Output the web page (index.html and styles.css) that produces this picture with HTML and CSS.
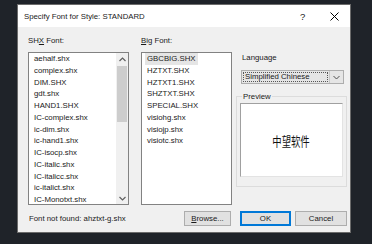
FILE: index.html
```html
<!DOCTYPE html>
<html lang="en">
<head>
    <meta charset="UTF-8">
    <title>Specify Font for Style</title>
    <link rel="stylesheet" href="styles.css">
</head>
<body>
<div class="dialog">
    <div class="titlebar">
        <span class="title">Specify Font for Style: STANDARD</span>
        <span class="help">?</span>
        <span class="close">
            <svg width="9" height="9" viewBox="0 0 9 9"><path d="M0.5 0.5 L8.5 8.5 M8.5 0.5 L0.5 8.5" stroke="#000" stroke-width="1" fill="none"/></svg>
        </span>
    </div>

    <div class="body">
        <div class="main">
            <!-- SHX font list -->
            <div class="col col-shx">
                <div class="label">SH<u>X</u> Font:</div>
                <div class="listbox">
                    <ul class="items">
                        <li>aehalf.shx</li>
                        <li>complex.shx</li>
                        <li>DIM.SHX</li>
                        <li>gdt.shx</li>
                        <li>HAND1.SHX</li>
                        <li>IC-complex.shx</li>
                        <li>ic-dim.shx</li>
                        <li>ic-hand1.shx</li>
                        <li>IC-isocp.shx</li>
                        <li>IC-italic.shx</li>
                        <li>IC-italicc.shx</li>
                        <li>ic-italict.shx</li>
                        <li>IC-Monotxt.shx</li>
                    </ul>
                    <div class="scrollbar">
                        <div class="sb-arrow">
                            <svg width="7" height="5" viewBox="0 0 7 5"><path d="M0.5 4 L3.5 1 L6.5 4" stroke="#606060" stroke-width="1.2" fill="none"/></svg>
                        </div>
                        <div class="sb-track"><div class="sb-thumb"></div></div>
                        <div class="sb-arrow">
                            <svg width="7" height="5" viewBox="0 0 7 5"><path d="M0.5 1 L3.5 4 L6.5 1" stroke="#606060" stroke-width="1.2" fill="none"/></svg>
                        </div>
                    </div>
                </div>
            </div>

            <!-- Big font list -->
            <div class="col col-big">
                <div class="label"><u>B</u>ig Font:</div>
                <div class="listbox">
                    <ul class="items">
                        <li><span class="selected">GBCBIG.SHX</span></li>
                        <li>HZTXT.SHX</li>
                        <li>HZTXT1.SHX</li>
                        <li>SHZTXT.SHX</li>
                        <li>SPECIAL.SHX</li>
                        <li>visiohg.shx</li>
                        <li>visiojp.shx</li>
                        <li>visiotc.shx</li>
                    </ul>
                </div>
            </div>

            <!-- Language + preview -->
            <div class="col col-side">
                <div class="label lang-label">Language</div>
                <div class="combo">
                    <span class="combo-text">Simplified Chinese</span>
                    <span class="combo-btn">
                        <svg width="7" height="5" viewBox="0 0 7 5"><path d="M0.5 1 L3.5 4 L6.5 1" stroke="#505050" stroke-width="1" fill="none"/></svg>
                    </span>
                </div>
                <div class="group">
                    <span class="legend">Preview</span>
                    <div class="preview-box">
                        <span class="preview-text">中望软件</span>
                    </div>
                </div>
            </div>
        </div>

        <div class="footer">
            <span class="msg">Font not found: ahztxt-g.shx</span>
            <button class="btn btn-browse"><u>B</u>rowse...</button>
            <button class="btn btn-ok">OK</button>
            <button class="btn btn-cancel">Cancel</button>
        </div>
    </div>
</div>
</body>
</html>
```

FILE: styles.css
```css
body {
    margin: 0;
    padding: 4px 0 0 17px;
    background-color: #1f2329;
    font-family: "Liberation Sans", Arial, sans-serif;
    font-size: 7.8px;
    color: #1a1a1a;
    height: 240px;
    overflow: hidden;
}
u {
    text-decoration-thickness: 1px;
    text-underline-offset: 1px;
}
.dialog {
    width: 332px;
    height: 227px;
    border: 1px solid #6b6b6b;
    background-color: #f0f0f0;
    display: flex;
    flex-direction: column;
}
.titlebar {
    height: 22px;
    background-color: #fff;
    display: flex;
    align-items: center;
    padding-left: 6px;
}
.title {
    flex: 1;
}
.help {
    width: 14px;
    font-size: 9.5px;
    margin-right: 16px;
}
.close {
    width: 9px;
    height: 9px;
    margin-right: 11px;
    display: flex;
}
.body {
    flex: 1;
    padding: 8px 3px 0 10px;
    display: flex;
    flex-direction: column;
}
.main {
    display: flex;
    height: 170px;
}
.col {
    display: flex;
    flex-direction: column;
}
.label {
    height: 12px;
    line-height: 12px;
    margin-bottom: 5px;
}
.col-shx {
    width: 101px;
}
.col-big {
    width: 91px;
    margin-left: 12px;
}
.col-side {
    width: 111px;
    margin-left: 4px;
    padding-top: 17px;
}
.listbox {
    height: 151px;
    border: 1px solid #828282;
    background-color: #fff;
    display: flex;
}
.items {
    list-style: none;
    margin: 0;
    padding: 0 0 0 3px;
    flex: 1;
    overflow: hidden;
}
.items li {
    height: 11.75px;
    line-height: 11.75px;
    padding-left: 2px;
    white-space: nowrap;
}
.items .selected {
    display: inline-block;
    background-color: #e5e5e5;
    margin-left: -2px;
    padding: 0 2px;
}
.scrollbar {
    width: 12px;
    display: flex;
    flex-direction: column;
    background-color: #f0f0f0;
}
.sb-arrow {
    height: 12px;
    display: flex;
    align-items: center;
    justify-content: center;
}
.sb-track {
    flex: 1;
    padding: 1px 0;
}
.sb-thumb {
    height: 56px;
    margin: 0 1px;
    background-color: #cdcdcd;
}
.lang-label {
    margin-left: 6px;
    margin-bottom: 6px;
}
.combo {
    margin-left: 5px;
    width: 101px;
    height: 12px;
    border: 1px solid #adadad;
    background-color: #e5e5e5;
    display: flex;
    align-items: stretch;
}
.combo-text {
    flex: 1;
    margin: 1px;
    border: 1px dotted #555;
    line-height: 8px;
    padding-left: 1px;
}
.combo-btn {
    width: 13px;
    border-left: 1px solid #c8c8c8;
    display: flex;
    align-items: center;
    justify-content: center;
}
.group {
    margin-top: 12px;
    height: 83px;
    border: 1px solid #dcdcdc;
    position: relative;
    padding: 6px 3px 0 3px;
}
.legend {
    position: absolute;
    top: -6px;
    left: 5px;
    padding: 0 1px;
    background-color: #f0f0f0;
    line-height: 11px;
}
.preview-box {
    height: 72px;
    border: 1px solid #a0a0a0;
    border-right-color: #e3e3e3;
    border-bottom-color: #e3e3e3;
    background-color: #fff;
    display: flex;
    align-items: center;
    justify-content: center;
}
.preview-text {
    font-family: "Noto Sans CJK SC", sans-serif;
    font-size: 13px;
    transform: scaleX(0.72);
    color: #111;
}
.footer {
    margin-top: 6px;
    display: flex;
    align-items: center;
    height: 15px;
}
.msg {
    flex: 1;
    padding-left: 1px;
}
.btn {
    height: 15px;
    padding: 0;
    font-family: inherit;
    font-size: 7.8px;
    color: #1a1a1a;
    background-color: #e1e1e1;
    border: 1px solid #adadad;
    border-radius: 0;
}
.btn-browse {
    width: 47px;
}
.btn-ok {
    width: 51px;
    margin-left: 9px;
    border: 1px solid #0078d7;
    box-shadow: inset 0 0 0 1px #0078d7;
}
.btn-cancel {
    width: 52px;
    margin-left: 4px;
}
```
